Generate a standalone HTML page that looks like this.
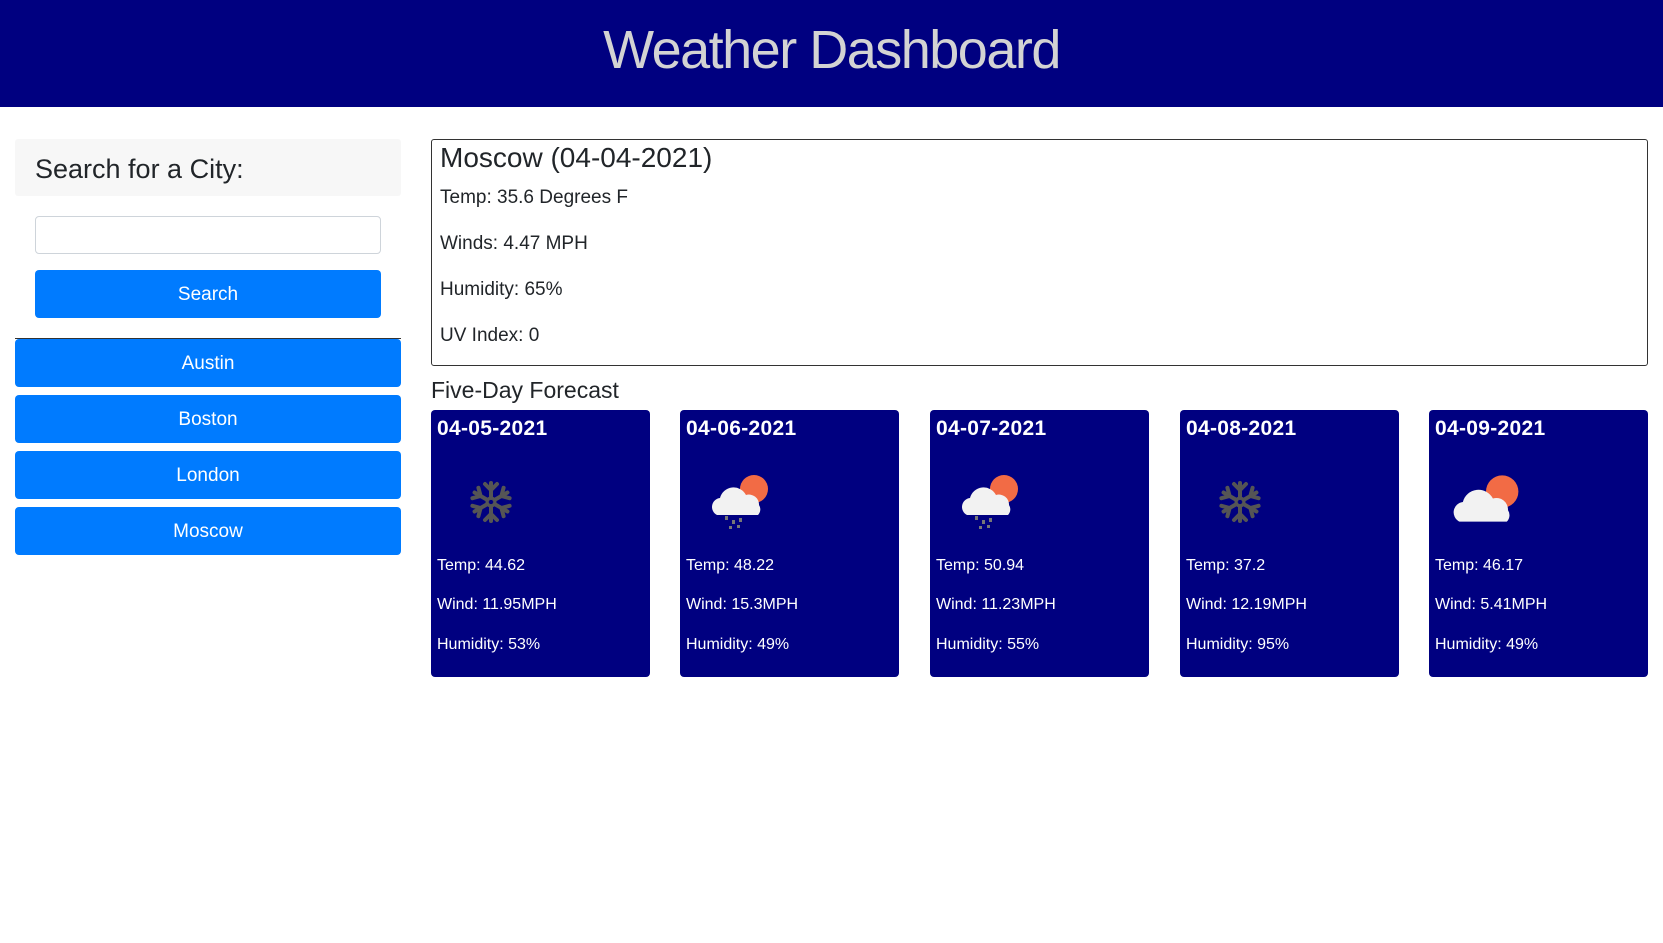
<!DOCTYPE html>
<html><head><meta charset="utf-8"><style>
*{box-sizing:border-box;margin:0;padding:0}
body{width:1663px;height:943px;background:#fff;font-family:"Liberation Sans",Arial,sans-serif;color:#212529;position:relative;overflow:hidden}
.a{position:absolute}
header{position:absolute;left:0;top:0;width:1663px;height:107px;background:#000080}
header h1{position:absolute;left:0;width:1663px;top:19px;text-align:center;font-weight:normal;font-size:54px;color:#d3d3d3;letter-spacing:-1.5px}
.btn{position:absolute;background:#007bff;color:#fff;border-radius:4px;text-align:center;font-size:19px}
.card{position:absolute;top:410px;width:219px;height:267px;background:#000080;border-radius:4px;color:#fff}
.card .d{position:absolute;left:6px;top:7px;font-size:21px;font-weight:bold;letter-spacing:0.3px}
.card .t{position:absolute;left:6px;font-size:16px}
.main p{position:absolute;left:8px;font-size:19px}
</style></head><body>
<header><h1>Weather Dashboard</h1></header>
<div class="a" style="left:15px;top:139px;width:386px;height:57px;background:#f7f7f7;border-radius:3px"></div>
<div class="a" style="left:35px;top:154px;font-size:27px;font-weight:500">Search for a City:</div>
<div class="a" style="left:35px;top:216px;width:346px;height:38px;border:1px solid #ced4da;border-radius:4px"></div>
<div class="btn" style="left:35px;top:270px;width:346px;height:48px;line-height:50px">Search</div>
<div class="a" style="left:15px;top:338px;width:386px;height:1px;background:#333"></div>
<div class="btn" style="left:15px;top:339px;width:386px;height:48px;line-height:50px">Austin</div>
<div class="btn" style="left:15px;top:395px;width:386px;height:48px;line-height:50px">Boston</div>
<div class="btn" style="left:15px;top:451px;width:386px;height:48px;line-height:50px">London</div>
<div class="btn" style="left:15px;top:507px;width:386px;height:48px;line-height:50px">Moscow</div>

<div class="a main" style="left:431px;top:139px;width:1217px;height:227px;border:1px solid #333;border-radius:3px">
<div class="a" style="left:8px;top:2px;font-size:28px;font-weight:500">Moscow (04-04-2021)</div>
<p style="top:47px">Temp: 35.6 Degrees F</p>
<p style="top:93px">Winds: 4.47 MPH</p>
<p style="top:139px">Humidity: 65%</p>
<p style="top:185px">UV Index: 0</p>
</div>
<div class="a" style="left:431px;top:377px;font-size:23px;font-weight:500">Five-Day Forecast</div>

<svg width="0" height="0" style="position:absolute"><defs>
<g id="snow" stroke="#555" stroke-width="4" fill="none" stroke-linecap="round">
<g id="arm"><line x1="0" y1="-4" x2="0" y2="-19"/><polyline points="-6,-18 0,-12 6,-18"/></g>
<use href="#arm" transform="rotate(60)"/><use href="#arm" transform="rotate(120)"/><use href="#arm" transform="rotate(180)"/><use href="#arm" transform="rotate(240)"/><use href="#arm" transform="rotate(300)"/>
<circle r="4" stroke-width="3"/></g>
<g id="cloud"><circle cx="46" cy="15" r="14" fill="#f26b45"/>
<path d="M9 41 a9 9 0 0 1 3-17 a14 14 0 0 1 26-3 a10 10 0 0 1 13 10 a8 8 0 0 1 -1 10 z" fill="#f2f2f2"/></g>
<g id="rain" fill="#777"><rect x="17" y="42" width="3" height="4"/><rect x="24" y="46" width="3" height="4"/><rect x="31" y="44" width="3" height="4"/><rect x="21" y="52" width="3" height="3"/><rect x="29" y="51" width="3" height="3"/></g>
</defs></svg>

<div class="card" style="left:431px"><div class="d">04-05-2021</div>
<svg class="a" style="left:38px;top:70px" width="44" height="44" viewBox="-22 -22 44 44"><use href="#snow"/></svg>
<div class="t" style="top:147px">Temp: 44.62</div><div class="t" style="top:186px">Wind: 11.95MPH</div><div class="t" style="top:226px">Humidity: 53%</div></div>

<div class="card" style="left:680px"><div class="d">04-06-2021</div>
<svg class="a" style="left:28px;top:64px" width="64" height="60"><use href="#cloud"/><use href="#rain"/></svg>
<div class="t" style="top:147px">Temp: 48.22</div><div class="t" style="top:186px">Wind: 15.3MPH</div><div class="t" style="top:226px">Humidity: 49%</div></div>

<div class="card" style="left:930px"><div class="d">04-07-2021</div>
<svg class="a" style="left:28px;top:64px" width="64" height="60"><use href="#cloud"/><use href="#rain"/></svg>
<div class="t" style="top:147px">Temp: 50.94</div><div class="t" style="top:186px">Wind: 11.23MPH</div><div class="t" style="top:226px">Humidity: 55%</div></div>

<div class="card" style="left:1180px"><div class="d">04-08-2021</div>
<svg class="a" style="left:38px;top:70px" width="44" height="44" viewBox="-22 -22 44 44"><use href="#snow"/></svg>
<div class="t" style="top:147px">Temp: 37.2</div><div class="t" style="top:186px">Wind: 12.19MPH</div><div class="t" style="top:226px">Humidity: 95%</div></div>

<div class="card" style="left:1429px"><div class="d">04-09-2021</div>
<svg class="a" style="left:20px;top:64px" width="74" height="56" viewBox="0 0 64 48"><use href="#cloud"/></svg>
<div class="t" style="top:147px">Temp: 46.17</div><div class="t" style="top:186px">Wind: 5.41MPH</div><div class="t" style="top:226px">Humidity: 49%</div></div>
</body></html>
